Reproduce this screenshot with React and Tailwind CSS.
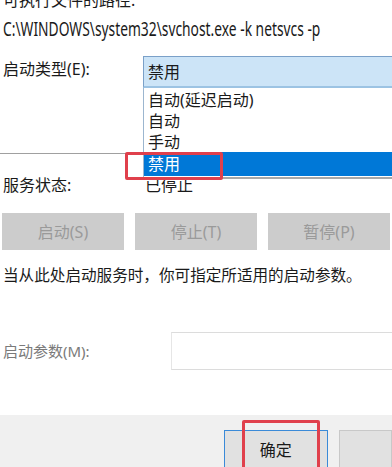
import React from "react"

const font = { fontFamily: '"Noto Sans", "Noto Sans CJK SC", sans-serif' }

export default function App() {
  const items = ["自动(延迟启动)", "自动", "手动"]

  return (
    <div
      className="relative w-[392px] h-[467px] overflow-hidden bg-white text-[#1a1a1a]"
      style={font}
    >
      <div className="px-[3px]">
        <div className="h-[10px] overflow-hidden">
          <div className="-mt-[10px] text-[16px] leading-[20px] whitespace-nowrap">可执行文件的路径:</div>
        </div>
        <div className="h-[38px] flex items-center">
          <div className="text-[19px] whitespace-nowrap scale-x-[0.727] origin-left">
            C:\WINDOWS\system32\svchost.exe -k netsvcs -p
          </div>
        </div>

        <div className="mt-[8px] flex h-[32px] items-center">
          <div className="w-[140px] text-[16px] leading-none -mt-[6px]">启动类型(E):</div>
          <div className="flex-1 h-full -mr-[10px] bg-[#cce4f7] border border-[#7aa0c8] border-b-[#9cc3e3] border-b-2 flex items-center pl-[4px] text-[16px]">
            禁用
          </div>
        </div>
      </div>

      <div className="mt-[65px] h-px bg-[#a0a0a0]" />

      <div className="mt-[19px] px-[3px] flex h-[24px] items-center text-[16px]">
        <div className="w-[142px]">服务状态:</div>
        <div>已停止</div>
      </div>

      <div className="mt-[16px] flex gap-[11px] px-[2px] h-[37px]">
        <div className="w-[131px] bg-[#cccccc] text-[#9a9a9a] text-[16px] flex items-center justify-center">启动(S)</div>
        <div className="w-[131px] bg-[#cccccc] text-[#9a9a9a] text-[16px] flex items-center justify-center">停止(T)</div>
        <div className="w-[131px] bg-[#cccccc] text-[#9a9a9a] text-[16px] flex items-center justify-center">暂停(P)</div>
      </div>

      <div className="mt-[14px] px-[3px] h-[24px] flex items-center text-[15.6px] whitespace-nowrap">
        当从此处启动服务时，你可指定所适用的启动参数。
      </div>

      <div className="mt-[44px] flex items-center px-[3px] h-[38px]">
        <div className="w-[168px] text-[15px] text-[#7a7a7a]">启动参数(M):</div>
        <div className="flex-1 h-full -mr-[10px] border border-[#dcdcdc] border-l-[#e6e6e6] bg-white" />
      </div>

      <div className="mt-[45px] h-[52px] bg-[#f0f0f0] flex pt-[15px] pl-[224px] gap-[11px]">
        <div className="w-[117px] h-[40px] bg-[#e1e1e1] border border-[#3a8ad8] flex items-center justify-center text-[16px]">
          确定
        </div>
        <div className="w-[60px] h-[40px] bg-[#e1e1e1] border border-[#c8c8c8]" />
      </div>

      {/* dropdown list overlay */}
      <div className="absolute left-[143px] top-[88px] w-[260px] h-[91px] bg-white border-l border-[#9cb6cf] border-b-2 border-b-[#a8a8a8] pt-[1px]">
        {items.map((t) => (
          <div key={t} className="h-[21px] flex items-center pl-[4px] text-[16px]">
            {t}
          </div>
        ))}
        <div className="h-[24px] flex items-center pl-[4px] text-[16px] bg-[#0078d7] text-white">禁用</div>
      </div>

      {/* red highlight boxes */}
      <div className="absolute left-[125px] top-[152px] w-[98px] h-[28px] border-[3px] border-[#e0404c] rounded-[2px]" />
      <div className="absolute left-[242px] top-[420px] w-[78px] h-[60px] border-[3px] border-[#e0404c] rounded-[2px]" />
    </div>
  )
}
